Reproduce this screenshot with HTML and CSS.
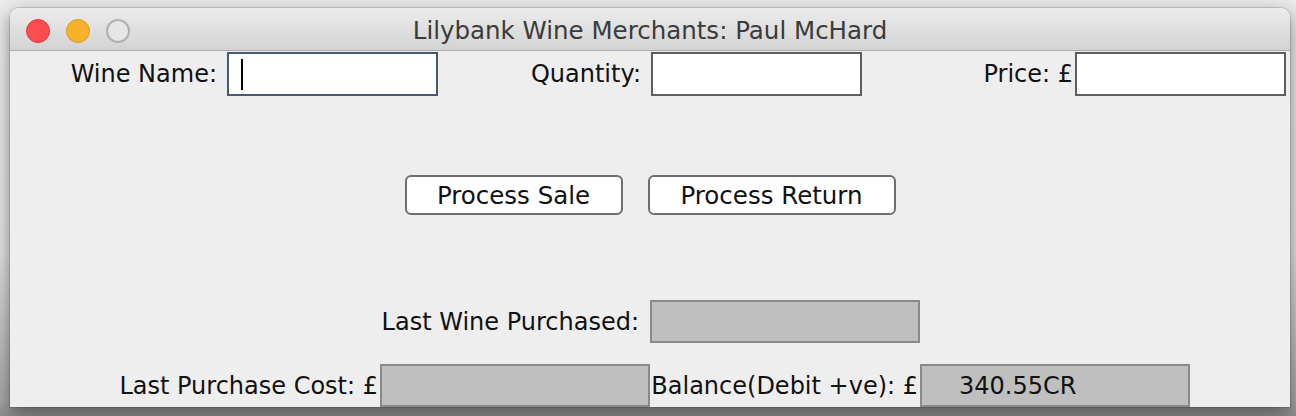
FILE: index.html
```html
<!DOCTYPE html>
<html>
<head>
<meta charset="utf-8">
<link rel="stylesheet" href="styles.css">
</head>
<body>
<div class="window">
  <div class="titlebar">
    <div class="lights">
      <span class="light red"></span>
      <span class="light yellow"></span>
      <span class="light off"></span>
    </div>
    <div class="title">Lilybank Wine Merchants: Paul McHard</div>
  </div>
  <div class="content">
    <div class="row-inputs">
      <div class="cell"><span class="label">Wine Name:</span><div class="field focused"><span class="caret"></span></div></div>
      <div class="cell"><span class="label">Quantity:</span><div class="field"></div></div>
      <div class="cell"><span class="label tight">Price: £</span><div class="field"></div></div>
    </div>
    <div class="row-buttons">
      <button class="btn sale">Process Sale</button>
      <button class="btn ret">Process Return</button>
    </div>
    <div class="grid4 row-last">
      <span class="glabel span2">Last Wine Purchased:</span>
      <div class="out"></div>
    </div>
    <div class="grid4 row-bottom">
      <span class="glabel">Last Purchase Cost: £</span>
      <div class="out"></div>
      <span class="glabel">Balance(Debit +ve): £</span>
      <div class="out"><span class="value">340.55CR</span></div>
    </div>
  </div>
</div>
</body>
</html>
```
FILE: styles.css
```css
* { box-sizing: border-box; }
html, body { margin: 0; padding: 0; }
body {
  width: 1296px;
  height: 416px;
  overflow: hidden;
  background: linear-gradient(to bottom, #ebebeb 0%, #e2e2e2 60%, #a8a8a8 96%, #8e8e8e 100%);
  font-family: "DejaVu Sans", "Liberation Sans", sans-serif;
  color: #111;
}
.window {
  margin: 8px 0 0 10px;
  width: 1280px;
  height: 399px;
  border-radius: 9px 9px 0 0;
  overflow: hidden;
  box-shadow: 0 6px 18px rgba(0,0,0,0.45), 0 0 0 1px rgba(0,0,0,0.12);
  background: #eeeeee;
}
.titlebar {
  height: 43px;
  background: linear-gradient(to bottom, #ececec, #d3d3d3);
  border-bottom: 1px solid #acacac;
  display: flex;
  align-items: center;
  justify-content: center;
  position: relative;
}
.lights {
  position: absolute;
  left: 16px;
  top: 11px;
  display: flex;
  gap: 16px;
}
.light {
  width: 24px;
  height: 24px;
  border-radius: 50%;
  display: block;
}
.light.red { background: #fc4c4e; border: 1px solid #e0393b; }
.light.yellow { background: #f8b22a; border: 1px solid #dc9a1c; }
.light.off { background: #e6e6e6; border: 2px solid #b0b0b0; }
.title {
  font-size: 24.5px;
  color: #3b3b3b;
  padding-top: 2px;
}
.content {
  height: 356px;
  padding-top: 1px;
}
.label, .glabel, .value {
  font-size: 24px;
  white-space: nowrap;
}
.row-inputs {
  display: grid;
  grid-template-columns: repeat(3, 424px);
  padding: 0 4px;
}
.cell {
  display: flex;
  justify-content: flex-end;
  align-items: center;
  height: 44px;
}
.cell .label { margin-right: 10px; }
.cell .label.tight { margin-right: 2px; }
.field {
  width: 211px;
  height: 44px;
  background: #ffffff;
  border: 2px solid #5e5e5e;
  position: relative;
}
.field.focused { border-color: #475a72; }
.caret {
  position: absolute;
  left: 12px;
  top: 5px;
  width: 2px;
  height: 31px;
  background: #000;
}
.row-buttons {
  margin-top: 79px;
  display: flex;
  justify-content: center;
  gap: 25px;
}
.btn {
  height: 40px;
  background: #ffffff;
  border: 2px solid #6e6e6e;
  border-radius: 6px;
  font-family: inherit;
  font-size: 24.5px;
  color: #111;
  padding: 0;
}
.btn.sale { width: 218px; }
.btn.ret { width: 248px; }
.grid4 {
  display: grid;
  grid-template-columns: repeat(4, 270px);
  justify-content: center;
  align-items: center;
  height: 43px;
}
.row-last { margin-top: 85px; }
.out {
  width: 270px;
  height: 43px;
  background: #bfbfbf;
  border: 2px solid #8a8a8a;
  display: flex;
  align-items: center;
}
.row-bottom { margin-top: 21px; }
.glabel { text-align: right; padding-right: 2px; }
.glabel.span2 { grid-column: 1 / span 2; padding-right: 11px; }
.value { padding-left: 37px; }
```
